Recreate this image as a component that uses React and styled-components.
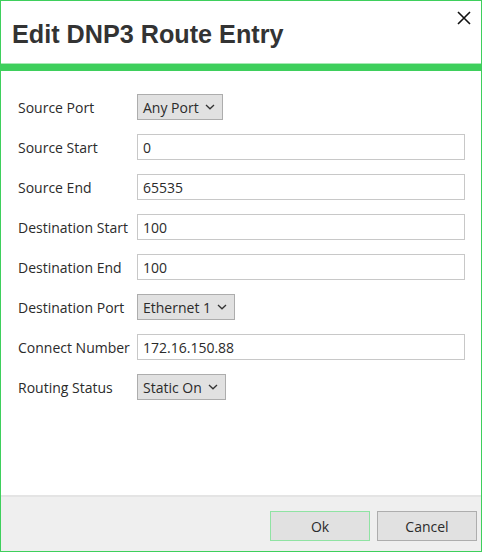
import styled, { createGlobalStyle } from 'styled-components';

const GlobalStyle = createGlobalStyle`
	html, body {
		margin: 0;
		padding: 0;
		background: #fff;
	}
	* {
		box-sizing: border-box;
	}
`;

const Dialog = styled.div`
	width: 482px;
	height: 552px;
	border: 1px solid #3ecf5c;
	background: #fff;
	display: flex;
	flex-direction: column;
	font-family: 'Open Sans', 'Noto Sans', sans-serif;
	color: #2b2b2b;
`;

const Header = styled.div`
	height: 70px;
	border-bottom: 7px solid #3ecf5c;
	box-shadow: inset 0 -1px 0 #a8e9b5;
	display: flex;
	align-items: flex-start;
	justify-content: space-between;
	padding: 18px 9px 0 11px;
`;

const Title = styled.h1`
	margin: 0;
	font-family: 'Liberation Sans', Arial, sans-serif;
	font-weight: bold;
	font-size: 25.2px;
	line-height: 30px;
	color: #333;
`;

const CloseBtn = styled.button`
	background: transparent;
	border: none;
	padding: 0;
	margin-top: -9px;
	width: 16px;
	height: 16px;
	cursor: pointer;
	display: flex;
	align-items: center;
	justify-content: center;
`;

const Body = styled.div`
	flex: 1;
	padding: 23px 16px 0 17px;
	display: flex;
	flex-direction: column;
	gap: 14px;
`;

const Row = styled.div`
	display: flex;
	align-items: center;
	height: 26px;
`;

const Label = styled.label`
	width: 119px;
	flex: none;
	font-size: 14px;
	color: #2b2b2b;
	white-space: nowrap;
`;

const TextInput = styled.input`
	width: 328px;
	height: 26px;
	border: 1px solid #c8c8c8;
	padding: 0 5px;
	font-family: 'Open Sans', 'Noto Sans', sans-serif;
	font-size: 14px;
	color: #2b2b2b;
	outline: none;
	background: #fff;
`;

const Select = styled.div`
	height: 26px;
	display: inline-flex;
	align-items: center;
	gap: 6px;
	padding: 0 7px 0 5px;
	background: #e1e1e1;
	border: 1px solid #adadad;
	font-size: 14px;
	color: #2b2b2b;
	white-space: nowrap;
`;

const Footer = styled.div`
	height: 56px;
	background: #efefef;
	border-top: 2px solid #e4e4e4;
	display: flex;
	justify-content: flex-end;
	align-items: flex-start;
	gap: 7px;
	padding: 14px 4px 0 0;
`;

const Button = styled.button`
	width: 100px;
	height: 30px;
	background: #e1e1e1;
	border: 1px solid ${(p) => (p.$primary ? '#8fe3a3' : '#adadad')};
	font-family: 'Open Sans', 'Noto Sans', sans-serif;
	font-size: 14px;
	color: #2b2b2b;
	cursor: pointer;
`;

const Chevron = () => (
	<svg width="10" height="6" viewBox="0 0 10 6">
		<polyline points="1,1 5,4.8 9,1" fill="none" stroke="#333" strokeWidth="1.3" />
	</svg>
);

const rows = [
	{ label: 'Source Port', select: 'Any Port' },
	{ label: 'Source Start', value: '0' },
	{ label: 'Source End', value: '65535' },
	{ label: 'Destination Start', value: '100' },
	{ label: 'Destination End', value: '100' },
	{ label: 'Destination Port', select: 'Ethernet 1' },
	{ label: 'Connect Number', value: '172.16.150.88' },
	{ label: 'Routing Status', select: 'Static On' },
];

export default function App() {
	return (
		<>
			<GlobalStyle />
			<Dialog>
				<Header>
					<Title>Edit DNP3 Route Entry</Title>
					<CloseBtn>
						<svg width="14" height="14" viewBox="0 0 14 14">
							<path d="M1 1 L13 13 M13 1 L1 13" stroke="#111" strokeWidth="1.6" />
						</svg>
					</CloseBtn>
				</Header>
				<Body>
					{rows.map((r) => (
						<Row key={r.label}>
							<Label>{r.label}</Label>
							{r.select ? (
								<Select>
									{r.select}
									<Chevron />
								</Select>
							) : (
								<TextInput defaultValue={r.value} />
							)}
						</Row>
					))}
				</Body>
				<Footer>
					<Button $primary>Ok</Button>
					<Button>Cancel</Button>
				</Footer>
			</Dialog>
		</>
	);
}
